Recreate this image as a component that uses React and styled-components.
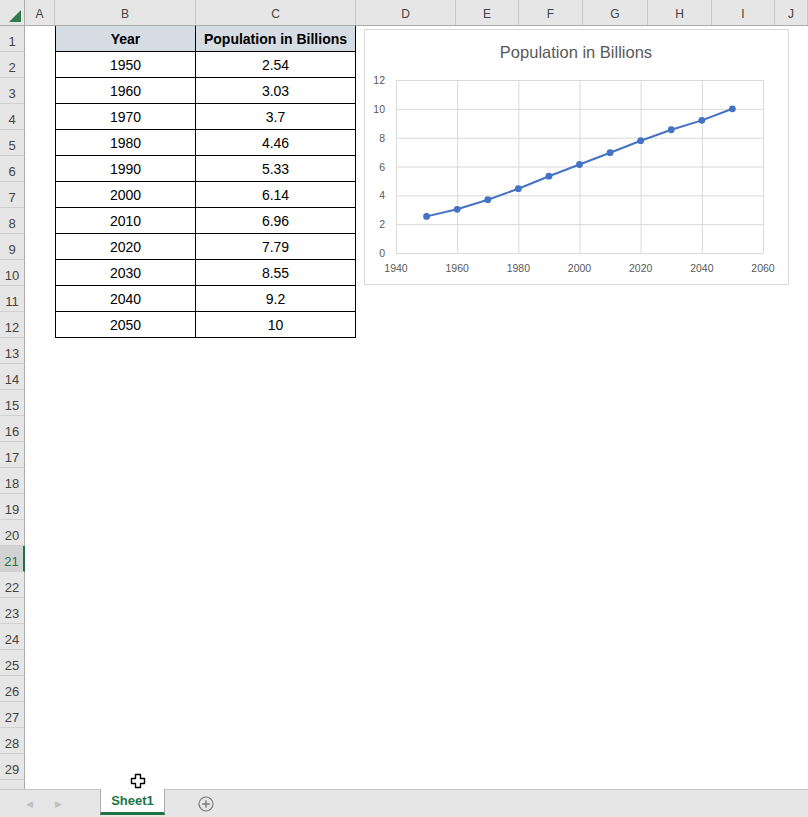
import React from 'react';
import styled, { createGlobalStyle } from 'styled-components';

const GlobalStyle = createGlobalStyle`
  html, body { margin: 0; padding: 0; background: #fff; }
  body { font-family: "Liberation Sans", Arial, sans-serif; overflow: hidden; }
`;

const COLS = ['A', 'B', 'C', 'D', 'E', 'F', 'G', 'H', 'I', 'J'];
const TEMPLATE = '25px 30px 141px 160px 100px 63px 64px 65px 64px 63px 1fr';

const DATA = [
  [1950, 2.54], [1960, 3.03], [1970, 3.7], [1980, 4.46], [1990, 5.33], [2000, 6.14],
  [2010, 6.96], [2020, 7.79], [2030, 8.55], [2040, 9.2], [2050, 10],
];

const ROW_COUNT = 30;
const SELECTED_ROW = 21;

export default function App() {
  const rows = Array.from({ length: ROW_COUNT }, (_, i) => i + 1);
  return (
    <Window>
      <GlobalStyle />
      <Sheet>
        <HeaderRow>
          <Corner>
            <svg width="12" height="12" viewBox="0 0 12 12">
              <polygon points="12,0 12,12 0,12" fill="#2f7a4a" />
            </svg>
          </Corner>
          {COLS.map((c) => (
            <ColHeader key={c}>{c}</ColHeader>
          ))}
        </HeaderRow>
        <Body>
          {rows.map((r) => {
            const inTable = r <= DATA.length + 1;
            const header = r === 1;
            const rec = DATA[r - 2];
            return (
              <Row key={r}>
                <RowHeader selected={r === SELECTED_ROW}>{r < ROW_COUNT ? r : ''}</RowHeader>
                <Cell />
                {inTable ? (
                  <>
                    <TableCell first header={header}>{header ? 'Year' : rec[0]}</TableCell>
                    <TableCell header={header}>{header ? 'Population in Billions' : rec[1]}</TableCell>
                  </>
                ) : (
                  <>
                    <Cell />
                    <Cell />
                  </>
                )}
                {COLS.slice(3).map((c) => (
                  <Cell key={c} />
                ))}
              </Row>
            );
          })}
        </Body>
        <ChartBox>
          <PopulationChart />
        </ChartBox>
        <Pointer>
          <svg width="16" height="16" viewBox="0 0 16 16">
            <path
              d="M5.5 1.5h5v4h4v5h-4v4h-5v-4h-4v-5h4z"
              fill="#fff"
              stroke="#000"
              strokeWidth="1.4"
              strokeLinejoin="round"
            />
          </svg>
        </Pointer>
      </Sheet>
      <TabBar>
        <TabNav>
          <NavArrow>◀</NavArrow>
          <NavArrow>▶</NavArrow>
        </TabNav>
        <SheetTab>Sheet1</SheetTab>
        <AddSheet>
          <svg width="16" height="16" viewBox="0 0 16 16">
            <circle cx="8" cy="8" r="7" fill="none" stroke="#7a7a7a" strokeWidth="1.2" />
            <path d="M8 4.2v7.6M4.2 8h7.6" stroke="#7a7a7a" strokeWidth="1.4" />
          </svg>
        </AddSheet>
      </TabBar>
    </Window>
  );
}

function PopulationChart() {
  const left = 32;
  const right = 399;
  const top = 51;
  const bottom = 224;
  const x = (year) => left + ((year - 1940) / 120) * (right - left);
  const y = (v) => bottom - (v / 12) * (bottom - top);
  const yTicks = [0, 2, 4, 6, 8, 10, 12];
  const xTicks = [1940, 1960, 1980, 2000, 2020, 2040, 2060];
  const line = DATA.map(([yr, v]) => `${x(yr).toFixed(1)},${y(v).toFixed(1)}`).join(' ');

  return (
    <svg width="425" height="256" viewBox="0 0 425 256">
      <text x="212" y="29" textAnchor="middle" fontSize="16.5" fill="#595959" fontFamily="Liberation Sans, Arial, sans-serif">
        Population in Billions
      </text>
      {yTicks.map((t) => (
        <g key={t}>
          <line x1={left} x2={right} y1={y(t) + 0.5} y2={y(t) + 0.5} stroke="#d9d9d9" strokeWidth="1" />
          <text x="21" y={y(t) + 4} textAnchor="end" fontSize="10.5" fill="#595959" fontFamily="Liberation Sans, Arial, sans-serif">
            {t}
          </text>
        </g>
      ))}
      {xTicks.map((t) => (
        <g key={t}>
          <line x1={x(t) + 0.5} x2={x(t) + 0.5} y1={top} y2={bottom} stroke="#d9d9d9" strokeWidth="1" />
          <text x={x(t)} y="243" textAnchor="middle" fontSize="10.5" fill="#595959" fontFamily="Liberation Sans, Arial, sans-serif">
            {t}
          </text>
        </g>
      ))}
      <polyline points={line} fill="none" stroke="#4472c4" strokeWidth="2" strokeLinejoin="round" />
      {DATA.map(([yr, v]) => (
        <circle key={yr} cx={x(yr)} cy={y(v)} r="3.4" fill="#4472c4" />
      ))}
    </svg>
  );
}

const Window = styled.div`
  width: 808px;
  height: 817px;
  display: flex;
  flex-direction: column;
  overflow: hidden;
`;

const Sheet = styled.div`
  position: relative;
  height: 789px;
  overflow: hidden;
  display: flex;
  flex-direction: column;
`;

const HeaderRow = styled.div`
  display: grid;
  grid-template-columns: ${TEMPLATE};
  height: 26px;
  flex-shrink: 0;
  background: #e6e6e6;
  border-bottom: 1px solid #ababab;
  box-sizing: border-box;
`;

const Corner = styled.div`
  display: flex;
  align-items: flex-end;
  justify-content: flex-end;
  padding: 0 3px 3px 0;
  border-right: 1px solid #ababab;
`;

const ColHeader = styled.div`
  display: flex;
  align-items: center;
  justify-content: center;
  padding-top: 2px;
  font-size: 12px;
  color: #444;
  border-right: 1px solid #c8c8c8;
  box-sizing: border-box;
`;

const Body = styled.div`
  display: flex;
  flex-direction: column;
`;

const Row = styled.div`
  display: grid;
  grid-template-columns: ${TEMPLATE};
  height: 26px;
  flex-shrink: 0;
`;

const RowHeader = styled.div`
  display: flex;
  align-items: flex-end;
  justify-content: center;
  padding-bottom: 2px;
  box-sizing: border-box;
  font-size: 13px;
  color: ${(p) => (p.selected ? '#217346' : '#444')};
  background: ${(p) => (p.selected ? '#d2d2d2' : '#e6e6e6')};
  border-bottom: 1px solid #d0d0d0;
  border-right: ${(p) => (p.selected ? '2px solid #217346' : '1px solid #ababab')};
`;

const Cell = styled.div`
  background: #fff;
`;

const TableCell = styled.div`
  display: flex;
  align-items: center;
  justify-content: center;
  box-sizing: border-box;
  padding-top: 1px;
  font-size: 14px;
  font-weight: ${(p) => (p.header ? 700 : 400)};
  color: #000;
  background: ${(p) => (p.header ? '#d6dce4' : '#fff')};
  border-right: 1px solid #000;
  border-bottom: 1px solid #000;
  border-left: ${(p) => (p.first ? '1px solid #000' : 'none')};
`;

const ChartBox = styled.div`
  position: absolute;
  left: 364px;
  top: 29px;
  width: 425px;
  height: 256px;
  background: #fff;
  border: 1px solid #d9d9d9;
  box-sizing: border-box;
  svg { display: block; margin: -1px; }
`;

const Pointer = styled.div`
  position: absolute;
  left: 130px;
  top: 773px;
  width: 16px;
  height: 16px;
`;

const TabBar = styled.div`
  height: 28px;
  display: flex;
  background: #e6e6e6;
  border-top: 1px solid #c6c6c6;
  box-sizing: border-box;
`;

const TabNav = styled.div`
  width: 100px;
  display: flex;
  align-items: center;
  gap: 18px;
  padding-left: 24px;
  box-sizing: border-box;
`;

const NavArrow = styled.span`
  font-size: 9px;
  color: #c0c0c0;
  width: 11px;
  text-align: center;
`;

const SheetTab = styled.div`
  width: 65px;
  margin-top: -1px;
  display: flex;
  align-items: center;
  justify-content: center;
  box-sizing: border-box;
  background: #fff;
  border-left: 1px solid #ababab;
  border-right: 1px solid #ababab;
  border-bottom: 3px solid #217346;
  margin-bottom: 2px;
  font-size: 13px;
  font-weight: 700;
  color: #217346;
`;

const AddSheet = styled.div`
  margin-left: 33px;
  display: flex;
  align-items: center;
`;
